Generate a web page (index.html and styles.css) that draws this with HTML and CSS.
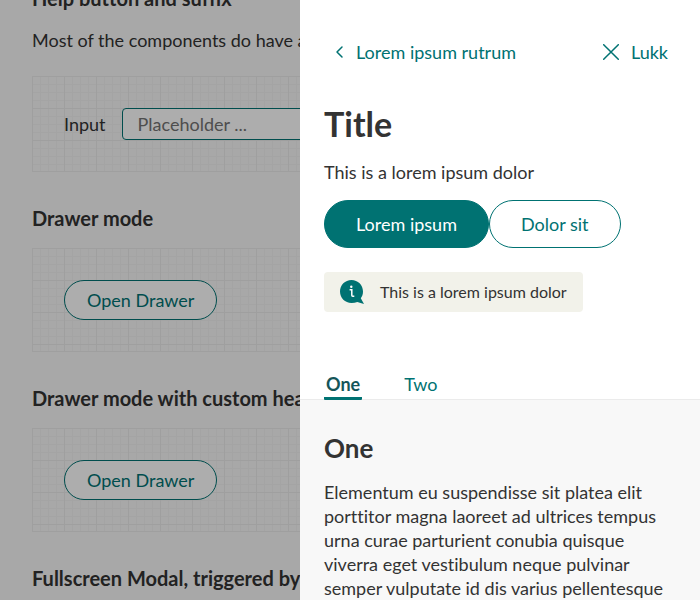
FILE: index.html
```
<!DOCTYPE html>
<html lang="en">
<head>
<meta charset="utf-8">
<meta name="viewport" content="width=device-width, initial-scale=1">
<title>Drawer</title>
<link rel="stylesheet" href="styles.css">
</head>
<body>
<main class="page">
  <h3 class="page-heading">Help button and suffix</h3>
  <p class="page-text">Most of the components do have a</p>
  <div class="example">
    <div class="field">
      <label for="input">Input</label>
      <input class="input" id="input" type="text" placeholder="Placeholder ...">
    </div>
  </div>
  <h3 class="page-heading">Drawer mode</h3>
  <div class="example">
    <button class="button button-medium" type="button">Open Drawer</button>
  </div>
  <h3 class="page-heading">Drawer mode with custom header</h3>
  <div class="example">
    <button class="button button-medium" type="button">Open Drawer</button>
  </div>
  <h3 class="page-heading">Fullscreen Modal, triggered by</h3>
</main>

<div class="overlay"></div>

<aside class="drawer" role="dialog" aria-labelledby="drawer-title">
  <header class="drawer-head">
    <nav class="drawer-nav">
      <button class="link-button" type="button">
        <svg class="icon-chevron" viewBox="0 0 16 16" aria-hidden="true"><path d="M10 3 5 8l5 5"/></svg>
        Lorem ipsum rutrum
      </button>
      <button class="link-button link-button-close" type="button">
        <svg class="icon-close" viewBox="0 0 16 16" aria-hidden="true"><path d="M.7.700 15.300 15.300M15.300.700.7 15.300"/></svg>
        Lukk
      </button>
    </nav>
    <h1 class="drawer-title" id="drawer-title">Title</h1>
    <p class="drawer-text">This is a lorem ipsum dolor</p>
    <div class="actions">
      <button class="button button-large button-primary" type="button">Lorem ipsum</button>
      <button class="button button-large" type="button">Dolor sit</button>
    </div>
    <div class="info">
      <svg class="icon-info" viewBox="0 0 24 24" aria-hidden="true">
        <path class="bubble" d="M11.500 0C17.900 0 23 5.100 23 11.500c0 2.700-.8 4.900-2.200 6.800L24 24l-6.700-2.100c-1.700.7-3.600 1.100-5.800 1.100C5.100 23 0 17.900 0 11.500S5.100 0 11.500 0Z"/>
        <path class="mark" d="M9.600 9.800h2.200v5.500q0 .9.900.9h1.600"/>
        <circle class="dot" cx="11.300" cy="6.700" r="1.200"/>
      </svg>
      <span>This is a lorem ipsum dolor</span>
    </div>
    <div class="tabs" role="tablist">
      <button class="tab tab-selected" type="button" role="tab" aria-selected="true">One</button>
      <button class="tab" type="button" role="tab" aria-selected="false">Two</button>
    </div>
  </header>
  <section class="drawer-body">
    <h2 class="body-title">One</h2>
    <p class="drawer-text">Elementum eu suspendisse sit platea elit porttitor magna laoreet ad ultrices tempus urna curae parturient conubia quisque viverra eget vestibulum neque pulvinar semper vulputate id dis varius pellentesque</p>
  </section>
</aside>
</body>
</html>
```
FILE: styles.css
```
:root {
  --teal: #007272;
  --teal-dark: #14555a;
  --text: #333;
  --white: #fff;
  --grey: #f8f8f8;
  --line: #ebebeb;
}

* {
  box-sizing: border-box;
}

body {
  margin: 0;
  height: 100vh;
  overflow: hidden;
  background: var(--grey);
  color: var(--text);
  font-family: Lato, "Liberation Sans", sans-serif;
  font-size: 18px;
  font-variant-ligatures: none;
  line-height: 24px;
}

button,
input {
  font: inherit;
}

h1,
h2,
h3,
p {
  margin: 0;
}

/* Page behind the drawer */
.page {
  margin-top: -14px;
  padding: 0 32px;
}

.page-heading {
  margin-bottom: 18px;
  font-size: 20px;
  font-weight: 700;
}

.page-text {
  margin-bottom: 24px;
}

.example {
  margin-bottom: 34px;
  padding: 31px;
  border: 1px solid #ebebeb;
  background-image:
    linear-gradient(#ebebeb 1px, transparent 1px),
    linear-gradient(90deg, #ebebeb 1px, transparent 1px),
    linear-gradient(#f2f2f2 1px, transparent 1px),
    linear-gradient(90deg, #f2f2f2 1px, transparent 1px);
  background-size: 32px 32px, 32px 32px, 8px 8px, 8px 8px;
  background-origin: border-box;
}

.field {
  display: flex;
  align-items: center;
  gap: 16px;
}

.input {
  flex: 1;
  min-width: 0;
  height: 32px;
  padding: 0 15px;
  border: 1px solid var(--teal);
  border-radius: 4px;
  background: var(--white);
  color: var(--text);
}

.input::placeholder {
  color: #737373;
  opacity: 1;
}

.button {
  display: block;
  border: 1px solid var(--teal);
  border-radius: 24px;
  background: var(--white);
  color: var(--teal);
}

.button-medium {
  height: 40px;
  padding: 0 22px;
}

.button-large {
  height: 48px;
  padding: 0 31px;
}

.button-primary {
  background: var(--teal);
  color: var(--white);
}

.overlay {
  position: fixed;
  inset: 0;
  background: rgba(0, 0, 0, 0.32);
}

/* Drawer */
.drawer {
  position: fixed;
  inset: 0 0 0 auto;
  display: flex;
  flex-direction: column;
  width: 50%;
  min-width: 400px;
  overflow-y: auto;
  scrollbar-width: none;
  background: var(--grey);
}

.drawer-head {
  padding: 32px 24px 0;
  border-bottom: 1px solid var(--line);
  background: var(--white);
}

.drawer-nav {
  display: flex;
  justify-content: space-between;
  padding: 0 8px;
}

.link-button {
  display: flex;
  align-items: center;
  gap: 8px;
  height: 40px;
  padding: 0;
  border: 0;
  background: none;
  color: var(--teal);
}

.link-button-close {
  gap: 12px;
}

.icon-chevron,
.icon-close {
  width: 16px;
  height: 16px;
  fill: none;
  stroke: currentColor;
  stroke-width: 1.5;
  stroke-linecap: round;
  stroke-linejoin: round;
}

.drawer-title {
  margin: 32px 0 16px;
  font-size: 34px;
  font-weight: 700;
  line-height: 40px;
}

.actions {
  display: flex;
  margin: 16px 0 24px;
}

.info {
  display: flex;
  align-items: center;
  gap: 16px;
  width: fit-content;
  padding: 8px 16px;
  border-radius: 4px;
  background: #f2f2ea;
  font-size: 16px;
}

.icon-info {
  width: 24px;
  height: 24px;
}

.bubble {
  fill: var(--teal);
}

.mark {
  fill: none;
  stroke: var(--white);
  stroke-width: 1.5;
}

.dot {
  fill: var(--white);
}

.tabs {
  display: flex;
  gap: 40px;
  margin: 56px 0 -1px;
}

.tab {
  height: 32px;
  padding: 2px 2px 0;
  border: 0;
  border-bottom: 3px solid transparent;
  background: none;
  color: var(--teal);
}

.tab-selected {
  border-color: var(--teal);
  border-radius: 1px;
  color: var(--teal-dark);
  font-weight: 700;
}

.drawer-body {
  padding: 32px 24px 0;
}

.body-title {
  margin-bottom: 16px;
  font-size: 26px;
  font-weight: 700;
  line-height: 32px;
}
```
